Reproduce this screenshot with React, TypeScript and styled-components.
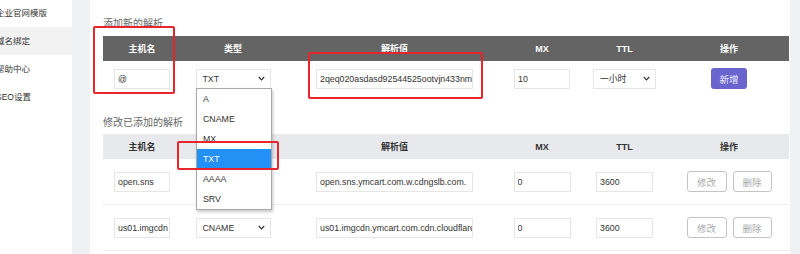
import React from 'react';
import styled, { createGlobalStyle } from 'styled-components';

const Global = createGlobalStyle`
  html, body { margin: 0; padding: 0; background: #f0f1f4; }
  body { font-family: "Liberation Sans", "Noto Sans CJK SC", sans-serif; color: #333; }
  * { box-sizing: border-box; }
`;

const Page = styled.div`
  display: flex;
  height: 254px;
  width: 800px;
  overflow: hidden;
  position: relative;
`;

const Sidebar = styled.nav`
  width: 72px;
  flex: none;
  background: #fff;
  overflow: hidden;
`;

const NavList = styled.ul`
  list-style: none;
  margin: -1px 0 0;
  padding: 0;
`;

const NavItem = styled.li<{ $active?: boolean }>`
  height: 28px;
  line-height: 28px;
  font-size: 8.5px;
  text-indent: -4px;
  white-space: nowrap;
  color: #333;
  background: ${(p) => (p.$active ? '#f2f2f2' : '#fff')};
`;

const Panel = styled.main`
  margin-left: 18px;
  width: 700px;
  flex: none;
  background: #fff;
  padding: 17px 1px 0 13px;
`;

const SectionTitle = styled.h3<{ $top?: number }>`
  margin: ${(p) => p.$top ?? 0}px 0 ${(p) => (p.$top ? 4 : 5)}px;
  font-size: 10px;
  line-height: 14px;
  font-weight: normal;
  color: #666;
`;

const Row = styled.div<{ $kind: 'dark' | 'light' | 'first' | 'body' }>`
  display: grid;
  grid-template-columns: 78px 104px 219px 76px 89px 120px;
  align-items: center;
  justify-items: center;
  ${(p) =>
    p.$kind === 'dark'
      ? 'height:25px;background:#646464;color:#fff;font-weight:bold;font-size:9px;'
      : p.$kind === 'light'
      ? 'height:25px;background:#e8e9ed;color:#333;font-weight:bold;font-size:9px;'
      : p.$kind === 'first'
      ? 'padding:7px 0;'
      : 'padding:12px 0 12px;border-bottom:1px solid #efefef;'}
`;

const Field = styled.input<{ $w: number }>`
  width: ${(p) => p.$w}px;
  height: 20px;
  border: 1px solid #e6e6e6;
  padding: 0 0 0 3px;
  font-family: inherit;
  font-size: 8.8px;
  color: #333;
  background: #fff;
  outline: none;
  margin: 0;
`;

const SelectBox = styled.div<{ $w: number }>`
  width: ${(p) => p.$w}px;
  height: 20px;
  border: 1px solid #e6e6e6;
  padding: 0 5px 0 6px;
  display: flex;
  align-items: center;
  justify-content: space-between;
  font-size: 8.8px;
  color: #333;
  background: #fff;
`;

const Actions = styled.div`
  display: flex;
  gap: 6px;
`;

const PrimaryButton = styled.button`
  width: 36px;
  height: 21px;
  border: none;
  border-radius: 3px;
  background: #6a64cf;
  color: #eef;
  font-family: inherit;
  font-size: 9.5px;
  padding: 0;
`;

const GhostButton = styled.button<{ $w: number }>`
  width: ${(p) => p.$w}px;
  height: 21px;
  border: 1px solid #c4c4c4;
  border-radius: 3px;
  background: #fff;
  color: #aaa;
  font-family: inherit;
  font-size: 9.5px;
  padding: 0;
`;

const Dropdown = styled.ul`
  position: absolute;
  left: 196px;
  top: 88px;
  width: 76px;
  margin: 0;
  padding: 0;
  list-style: none;
  background: #fff;
  border: 1px solid #a9a9a9;
  box-shadow: 1px 2px 3px rgba(0, 0, 0, 0.22);
`;

const Option = styled.li<{ $selected?: boolean }>`
  height: 20px;
  line-height: 20px;
  padding-left: 6px;
  font-size: 8.8px;
  color: ${(p) => (p.$selected ? '#fff' : '#333')};
  background: ${(p) => (p.$selected ? '#2290f5' : 'transparent')};
`;

const Mark = styled.div<{ $x: number; $y: number; $w: number; $h: number }>`
  position: absolute;
  left: ${(p) => p.$x}px;
  top: ${(p) => p.$y}px;
  width: ${(p) => p.$w}px;
  height: ${(p) => p.$h}px;
  border: 2px solid #e6262c;
  border-radius: 2px;
  pointer-events: none;
`;

const Chevron = () => (
  <svg width="7" height="5" viewBox="0 0 7 5">
    <polyline points="0.8,1 3.5,3.8 6.2,1" fill="none" stroke="#333" strokeWidth="1.2" />
  </svg>
);

const Select = ({ w, value }: { w: number; value: string }) => (
  <SelectBox $w={w}>
    <span>{value}</span>
    <Chevron />
  </SelectBox>
);

const heads = ['主机名', '类型', '解析值', 'MX', 'TTL', '操作'];

const records = [
  { host: 'open.sns', type: 'CNAME', value: 'open.sns.ymcart.com.w.cdngslb.com.', mx: '0', ttl: '3600' },
  { host: 'us01.imgcdn', type: 'CNAME', value: 'us01.imgcdn.ymcart.com.cdn.cloudflare.net.', mx: '0', ttl: '3600' },
];

export default function App() {
  return (
    <>
      <Global />
      <Page>
        <Sidebar>
          <NavList>
            <NavItem>企业官网模版</NavItem>
            <NavItem $active>域名绑定</NavItem>
            <NavItem>帮助中心</NavItem>
            <NavItem>SEO设置</NavItem>
          </NavList>
        </Sidebar>
        <Panel>
          <SectionTitle>添加新的解析</SectionTitle>
          <Row $kind="dark">
            {heads.map((h) => (
              <span key={h}>{h}</span>
            ))}
          </Row>
          <Row $kind="first">
            <Field $w={56} readOnly value="@" />
            <Select w={75} value="TXT" />
            <Field $w={157} readOnly value="2qeq020asdasd92544525ootvjn433nmxx" />
            <Field $w={56} readOnly value="10" />
            <Select w={63} value="一小时" />
            <PrimaryButton>新增</PrimaryButton>
          </Row>

          <SectionTitle $top={20}>修改已添加的解析</SectionTitle>
          <Row $kind="light">
            {heads.map((h) => (
              <span key={h}>{h}</span>
            ))}
          </Row>
          {records.map((r) => (
            <Row $kind="body" key={r.host}>
              <Field $w={56} readOnly value={r.host} />
              <Select w={75} value={r.type} />
              <Field $w={157} readOnly value={r.value} />
              <Field $w={57} readOnly value={r.mx} />
              <Field $w={57} readOnly value={r.ttl} />
              <Actions>
                <GhostButton $w={40}>修改</GhostButton>
                <GhostButton $w={39}>删除</GhostButton>
              </Actions>
            </Row>
          ))}
        </Panel>

        <Dropdown>
          <Option>A</Option>
          <Option>CNAME</Option>
          <Option>MX</Option>
          <Option $selected>TXT</Option>
          <Option>AAAA</Option>
          <Option>SRV</Option>
        </Dropdown>

        <Mark $x={93} $y={26} $w={82} $h={68} />
        <Mark $x={308} $y={52} $w={175} $h={47} />
        <Mark $x={177} $y={141} $w={102} $h={29} />
      </Page>
    </>
  );
}
